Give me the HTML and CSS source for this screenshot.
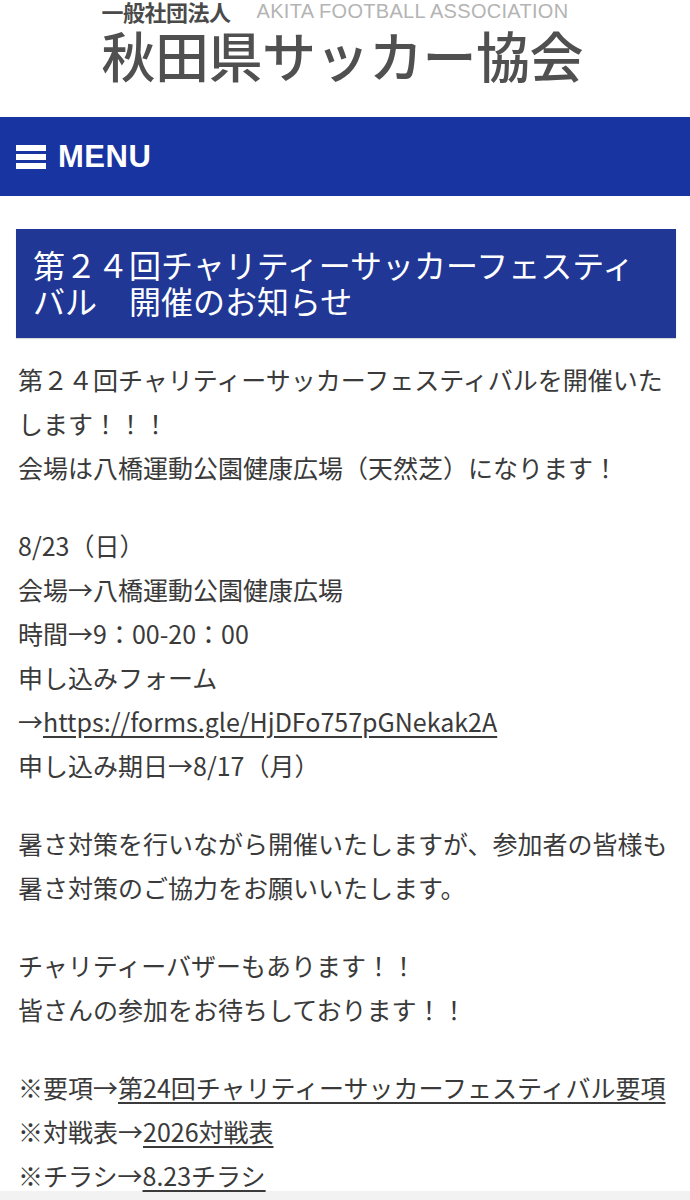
FILE: index.html
```html
<!DOCTYPE html>
<html lang="ja">
<head>
<meta charset="utf-8">
<link rel="stylesheet" href="styles.css">
</head>
<body>
<header class="site-header">
  <div class="logo">
    <div class="logo-top"><span class="logo-corp">一般社団法人</span><span class="logo-en">AKITA FOOTBALL ASSOCIATION</span></div>
    <div class="logo-name">秋田県サッカー協会</div>
  </div>
</header>
<nav class="menu-bar">
  <span class="burger"><i></i><i></i><i></i></span>
  <span class="menu-label">MENU</span>
</nav>
<main class="content">
  <h1 class="post-title">第２４回チャリティーサッカーフェスティバル　開催のお知らせ</h1>
  <p>第２４回チャリティーサッカーフェスティバルを開催いたします！！！<br>会場は八橋運動公園健康広場（天然芝）になります！</p>
  <p>8/23（日）<br>会場→八橋運動公園健康広場<br>時間→9：00-20：00<br>申し込みフォーム<br>→<a href="#">https://forms.gle/HjDFo757pGNekak2A</a><br>申し込み期日→8/17（月）</p>
  <p>暑さ対策を行いながら開催いたしますが、参加者の皆様も暑さ対策のご協力をお願いいたします。</p>
  <p>チャリティーバザーもあります！！<br>皆さんの参加をお待ちしております！！</p>
  <p class="links">※要項→<a href="#">第24回チャリティーサッカーフェスティバル要項</a><br>※対戦表→<a href="#">2026対戦表</a><br>※チラシ→<a href="#">8.23チラシ</a></p>
</main>
<div class="footer-band"></div>
</body>
</html>
```
FILE: styles.css
```css
html, body {
  margin: 0;
  padding: 0;
  background: #fff;
}
body {
  font-family: "Noto Sans CJK JP", "Noto Sans", sans-serif;
  color: #3a3a3a;
}
.site-header {
  height: 117px;
  display: flex;
  justify-content: center;
}
.logo {
  width: 482px;
  margin-left: -5px;
}
.logo-top {
  display: flex;
  align-items: center;
  gap: 26px;
  height: 22px;
}
.logo-corp {
  font-size: 22px;
  font-weight: 700;
  color: #4a4a4a;
  letter-spacing: -0.5px;
  line-height: 22px;
}
.logo-en {
  font-family: "Liberation Sans", Arial, sans-serif;
  font-size: 20px;
  color: #b4b4b4;
  letter-spacing: 0.3px;
  line-height: 22px;
}
.logo-name {
  font-size: 54px;
  font-weight: 500;
  color: #505050;
  line-height: 52px;
  margin-top: 7px;
  letter-spacing: -0.5px;
}
.menu-bar {
  background: #1834a0;
  height: 79px;
  display: flex;
  align-items: center;
  padding-left: 16px;
  gap: 12px;
}
.burger {
  display: flex;
  flex-direction: column;
  gap: 3px;
  width: 30px;
}
.burger i {
  display: block;
  height: 6px;
  background: #fff;
}
.menu-label {
  font-family: "Liberation Sans", Arial, sans-serif;
  font-weight: 700;
  font-size: 31px;
  color: #fff;
  letter-spacing: 0.5px;
}
.content {
  padding: 33px 14px 0 18px;
}
.post-title {
  margin: 0 0 19px -2px;
  background: #203796;
  color: #fff;
  font-weight: 400;
  font-size: 32px;
  line-height: 36px;
  padding: 17px 17px 20px;
  box-shadow: 0 1px 1px rgba(0,0,0,0.15);
}
.content p {
  margin: 0 0 34px;
  font-size: 25px;
  line-height: 44px;
}
.content a {
  color: #3a3a3a;
  text-decoration: underline;
  text-underline-offset: 4px;
}
.content p.links {
  margin-bottom: 0;
}
.footer-band {
  height: 60px;
  background: #f2f2f2;
  margin-top: -6px;
}
```
